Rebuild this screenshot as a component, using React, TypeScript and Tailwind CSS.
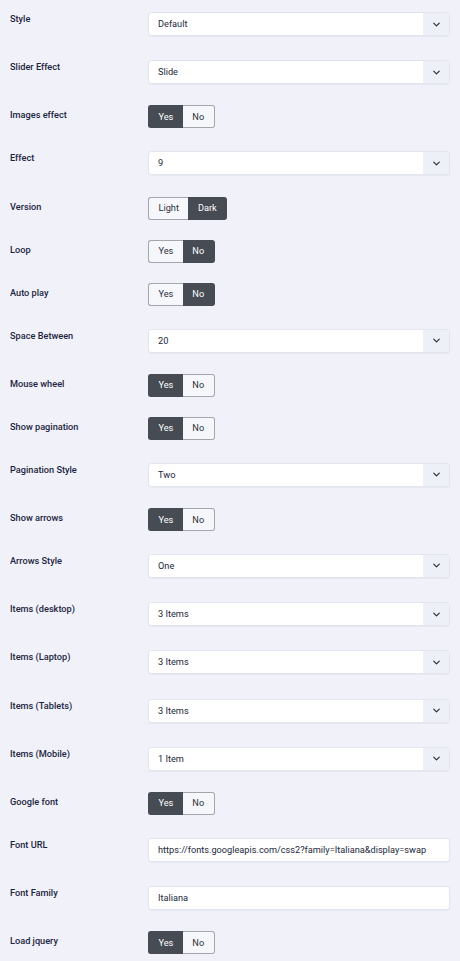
import { ChevronDown } from "lucide-react";

type Row =
  | { kind: "select"; label: string; value: string }
  | { kind: "input"; label: string; value: string }
  | { kind: "toggle"; label: string; options: [string, string]; active: number };

const rows: Row[] = [
  { kind: "select", label: "Style", value: "Default" },
  { kind: "select", label: "Slider Effect", value: "Slide" },
  { kind: "toggle", label: "Images effect", options: ["Yes", "No"], active: 0 },
  { kind: "select", label: "Effect", value: "9" },
  { kind: "toggle", label: "Version", options: ["Light", "Dark"], active: 1 },
  { kind: "toggle", label: "Loop", options: ["Yes", "No"], active: 1 },
  { kind: "toggle", label: "Auto play", options: ["Yes", "No"], active: 1 },
  { kind: "select", label: "Space Between", value: "20" },
  { kind: "toggle", label: "Mouse wheel", options: ["Yes", "No"], active: 0 },
  { kind: "toggle", label: "Show pagination", options: ["Yes", "No"], active: 0 },
  { kind: "select", label: "Pagination Style", value: "Two" },
  { kind: "toggle", label: "Show arrows", options: ["Yes", "No"], active: 0 },
  { kind: "select", label: "Arrows Style", value: "One" },
  { kind: "select", label: "Items (desktop)", value: "3 Items" },
  { kind: "select", label: "Items (Laptop)", value: "3 Items" },
  { kind: "select", label: "Items (Tablets)", value: "3 Items" },
  { kind: "select", label: "Items (Mobile)", value: "1 Item" },
  { kind: "toggle", label: "Google font", options: ["Yes", "No"], active: 0 },
  { kind: "input", label: "Font URL", value: "https://fonts.googleapis.com/css2?family=Italiana&display=swap" },
  { kind: "input", label: "Font Family", value: "Italiana" },
  { kind: "toggle", label: "Load jquery", options: ["Yes", "No"], active: 0 },
];

function Toggle({ options, active }: { options: [string, string]; active: number }) {
  return (
    <div className="flex h-[23px]">
      {options.map((o, i) => {
        const on = i === active;
        const cls = on
          ? "bg-[#464b54] border-[#464b54] text-white"
          : "bg-[#f6f7fb] border-[#a2a6ae] text-[#2a2f3a]";
        const shape = i === 0 ? "rounded-l-[3px] border-r-0" : "rounded-r-[3px] border-l-0";
        return (
          <div key={o} className={`flex items-center justify-center border px-[9.5px] ${cls} ${shape}`}>
            {o}
          </div>
        );
      })}
    </div>
  );
}

function Select({ value }: { value: string }) {
  return (
    <div className="pt-[3px] pb-[1.2px]">
      <div className="flex h-[24px] items-stretch rounded-[3px] border border-[#e2e5ee] bg-white shadow-[0_1px_1px_rgba(30,40,80,0.04)]">
        <div className="flex flex-1 items-center pl-[9px] text-[#22283a]">{value}</div>
        <div className="flex w-[26px] items-center justify-center rounded-r-[3px] bg-[#eef0f8]">
          <ChevronDown className="h-[11px] w-[11px] text-[#2a2f3d]" strokeWidth={2.6} />
        </div>
      </div>
    </div>
  );
}

function TextInput({ value }: { value: string }) {
  return (
    <div className="pt-[3px] pb-[1.2px]">
      <div className="flex h-[24px] items-center rounded-[3px] border border-[#e2e5ee] bg-white pl-[9px] text-[#22283a] shadow-[0_1px_1px_rgba(30,40,80,0.04)]">
        {value}
      </div>
    </div>
  );
}

export default function App() {
  return (
    <div
      className="min-h-[961px] w-[460px] bg-[#f0f1f9] pt-[9px] pr-[10px] pl-[10px] text-[9.2px]"
      style={{ fontFamily: "Roboto, 'Liberation Sans', sans-serif" }}
    >
      <div className="flex flex-col gap-[20px]">
        {rows.map((r) => (
          <div key={r.label} className="flex">
            <div className="w-[138px] shrink-0 font-medium leading-[19px] text-[#1c2540]">{r.label}</div>
            <div className="flex-1">
              {r.kind === "select" && <Select value={r.value} />}
              {r.kind === "input" && <TextInput value={r.value} />}
              {r.kind === "toggle" && <Toggle options={r.options} active={r.active} />}
            </div>
          </div>
        ))}
      </div>
    </div>
  );
}
